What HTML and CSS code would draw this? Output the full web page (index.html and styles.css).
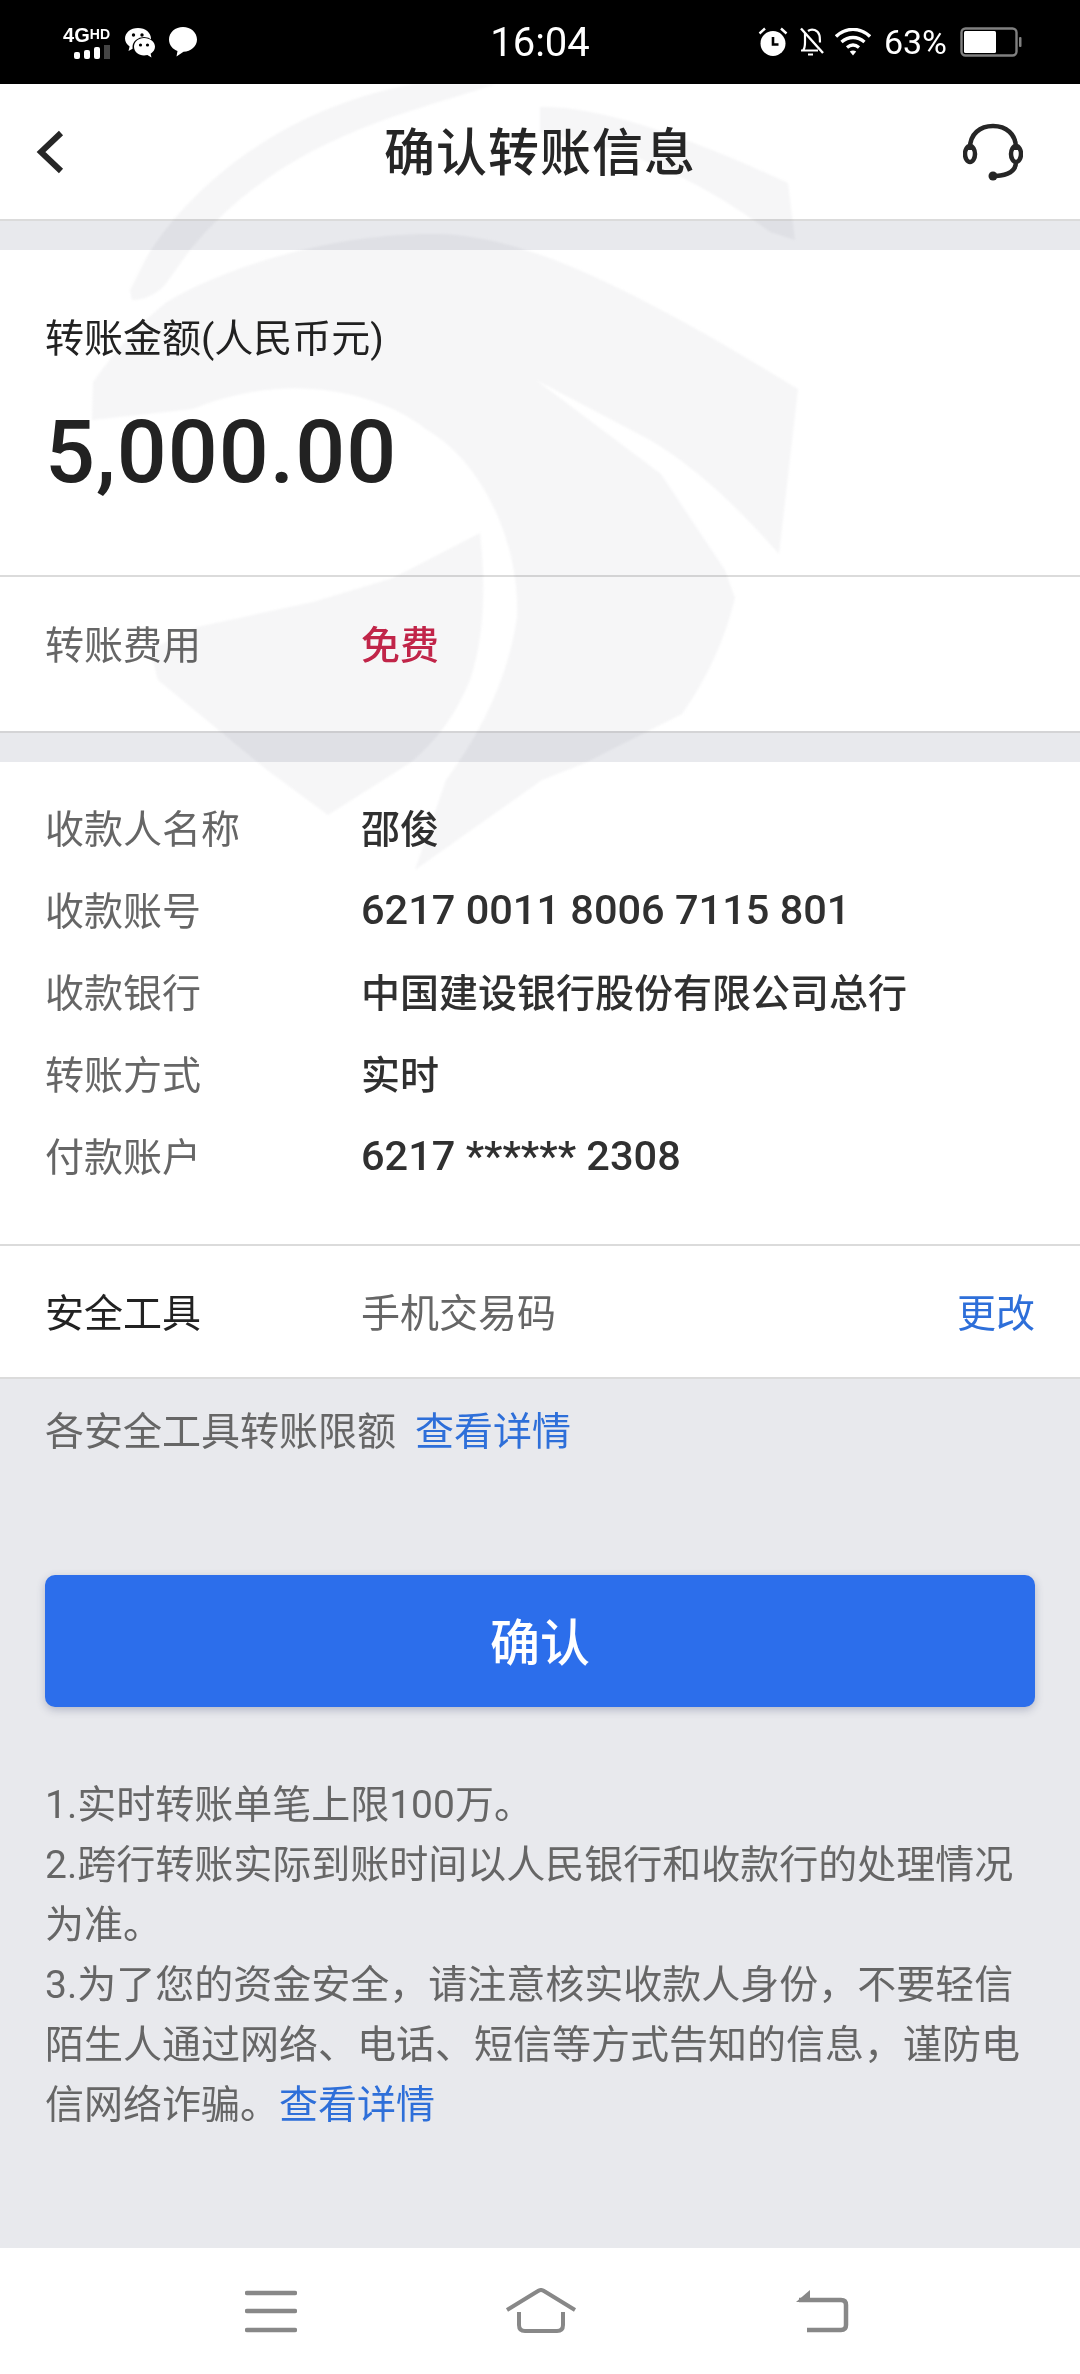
FILE: index.html
```html
<!DOCTYPE html>
<html lang="zh-CN">
<head>
    <meta charset="UTF-8">
    <meta name="viewport" content="width=device-width, initial-scale=1.0">
    <title>确认转账信息</title>
    <link rel="stylesheet" href="styles.css">
</head>
<body>
    <div class="page">
        <div class="status-bar">
            <div class="status-left">
                <div class="net">
                    <div class="net-label">4G<span class="net-hd">HD</span></div>
                    <svg class="net-bars" width="36" height="14" viewBox="0 0 36 14">
                        <rect x="0" y="7" width="6" height="7" rx="2" fill="#fff"/>
                        <rect x="10" y="5" width="6" height="9" rx="2" fill="#fff"/>
                        <rect x="20" y="2" width="6" height="12" rx="2" fill="#fff"/>
                        <rect x="30" y="0" width="6" height="14" fill="#444"/>
                    </svg>
                </div>
                <svg width="31" height="31" viewBox="0 0 31 31">
                    <path d="M14 1C6.5 1 1 5.800 1 11.500c0 3.300 1.800 6 4.600 8L4.500 24l5-2.700c1.400.4 2.900.6 4.500.6 7.500 0 13-4.700 13-10.400S21.500 1 14 1z" fill="#fff"/>
                    <circle cx="9.500" cy="8" r="1.700" fill="#000"/>
                    <circle cx="18" cy="8" r="1.700" fill="#000"/>
                    <ellipse cx="20" cy="20" rx="11.500" ry="10" fill="#000"/>
                    <path d="M20 11c-5.500 0-10 3.900-10 8.800s4.500 8.800 10 8.800c1.200 0 2.300-.2 3.400-.5l4.100 2.400-.9-3.800c2.600-1.600 4.400-4 4.400-6.900 0-4.900-5-8.800-11-8.800z" fill="#fff"/>
                    <circle cx="16.500" cy="18" r="1.600" fill="#000"/>
                    <circle cx="23.500" cy="18" r="1.600" fill="#000"/>
                </svg>
                <svg width="28" height="30" viewBox="0 0 28 30">
                    <path d="M14 0C6.300 0 0 5.300 0 12.500c0 5.700 4 10 8.500 11.500l-1 5.500 7-4.800c7.500-.1 13.500-5.600 13.500-12.200C28 5.300 21.700 0 14 0z" fill="#fff"/>
                </svg>
            </div>
            <div class="status-time">16:04</div>
            <div class="status-right">
                <svg width="30" height="30" viewBox="0 0 30 30">
                    <circle cx="15" cy="16.500" r="12.500" fill="#fff"/>
                    <path d="M15 10v7.500h5.500" fill="none" stroke="#000" stroke-width="2.600"/>
                    <path d="M1.500 6.500 7 1.500M28.500 6.500 23 1.500" stroke="#fff" stroke-width="2.400" fill="none"/>
                </svg>
                <svg width="27" height="30" viewBox="0 0 27 30">
                    <path d="M3 23.500h17M5 23.500c2-2.500 2-5 2-8V6M10 4c4-3 10-1 11.500 4.500.5 2 .3 5 .5 7" fill="none" stroke="#fff" stroke-width="2.200"/>
                    <path d="M10 26.500h5v2h-5z" fill="#fff"/>
                    <path d="M3 1.500 25 26" stroke="#fff" stroke-width="2.400"/>
                </svg>
                <svg width="36" height="28" viewBox="0 0 36 28">
                    <path d="M1 8.500c10-9.500 24-9.500 34 0" fill="none" stroke="#fff" stroke-width="3.400"/>
                    <path d="M6.500 14c7-6 16-6 23 0" fill="none" stroke="#fff" stroke-width="3.400"/>
                    <path d="M12 19.500c4-3.200 8-3.200 12 0" fill="none" stroke="#fff" stroke-width="3.400"/>
                    <path d="M14.800 23.500c2-1.400 4.400-1.400 6.400 0L18 27.500z" fill="#fff"/>
                </svg>
                <span class="status-pct">63%</span>
                <svg width="62" height="30" viewBox="0 0 62 30">
                    <rect x="1.500" y="1.500" width="55" height="27" rx="4" fill="none" stroke="#808080" stroke-width="2.400"/>
                    <rect x="4" y="4" width="32" height="22" rx="1.500" fill="#fff"/>
                    <rect x="59" y="10" width="2.500" height="10" rx="1" fill="#808080"/>
                </svg>
            </div>
        </div>

        <div class="nav-bar">
            <svg class="nav-back" width="28" height="44" viewBox="0 0 28 44">
                <path d="M25 3 5 22l20 19" fill="none" stroke="#262626" stroke-width="6"/>
            </svg>
            <div class="nav-title">确认转账信息</div>
            <svg class="nav-service" width="60" height="58" viewBox="0 0 60 58">
                <path d="M7 27V25C7 11 17 3 30 3s23 8 23 22v2" fill="none" stroke="#262626" stroke-width="4.500"/>
                <ellipse cx="7" cy="31" rx="5" ry="8" fill="none" stroke="#262626" stroke-width="4.500"/>
                <ellipse cx="53" cy="31" rx="5" ry="8" fill="none" stroke="#262626" stroke-width="4.500"/>
                <path d="M53 39c0 8-7 13-20 14" fill="none" stroke="#262626" stroke-width="4.500"/>
                <circle cx="30" cy="53" r="4.500" fill="#262626"/>
            </svg>
        </div>

        <div class="gap"></div>

        <div class="amount-box">
            <div class="amount-label">转账金额(人民币元)</div>
            <div class="amount-value">5,000.00</div>
        </div>

        <div class="row fee-row">
            <span class="row-label">转账费用</span>
            <span class="fee-value">免费</span>
        </div>

        <div class="gap"></div>

        <div class="details">
            <div class="row detail-row"><span class="row-label">收款人名称</span><span class="row-value">邵俊</span></div>
            <div class="row detail-row"><span class="row-label">收款账号</span><span class="row-value row-num">6217 0011 8006 7115 801</span></div>
            <div class="row detail-row"><span class="row-label">收款银行</span><span class="row-value">中国建设银行股份有限公司总行</span></div>
            <div class="row detail-row"><span class="row-label">转账方式</span><span class="row-value">实时</span></div>
            <div class="row detail-row"><span class="row-label">付款账户</span><span class="row-value row-num">6217 ****** 2308</span></div>
        </div>

        <div class="row tool-row">
            <span class="tool-label">安全工具</span>
            <span class="tool-value">手机交易码</span>
            <span class="link">更改</span>
        </div>

        <div class="content">
            <div class="limit-tip">各安全工具转账限额<span class="link limit-link">查看详情</span></div>
            <div class="confirm-btn">确认</div>
            <div class="notes">
                1.实时转账单笔上限100万。<br>
                2.跨行转账实际到账时间以人民银行和收款行的处理情况为准。<br>
                3.为了您的资金安全，请注意核实收款人身份，不要轻信陌生人通过网络、电话、短信等方式告知的信息，谨防电信网络诈骗。<span class="link">查看详情</span>
            </div>
        </div>

        <div class="bottom-bar">
            <svg width="52" height="44" viewBox="0 0 52 44">
                <path d="M2 4h48M2 22h48M2 41h48" stroke="#888" stroke-width="4.500" stroke-linecap="round" fill="none"/>
            </svg>
            <svg width="72" height="46" viewBox="0 0 72 46">
                <path d="M2 22 33 3q3-2 6 0l31 19" fill="none" stroke="#888" stroke-width="4"/>
                <path d="M14 24v13q0 6 6 6h32q6 0 6-6V24" fill="none" stroke="#888" stroke-width="4"/>
            </svg>
            <svg width="54" height="44" viewBox="0 0 54 44">
                <path d="M15 1 1 13h14z" fill="#888"/>
                <path d="M4 11h42q5 0 5 5v20q0 5-5 5H12" fill="none" stroke="#888" stroke-width="4.500"/>
            </svg>
        </div>

        <svg class="watermark" width="1080" height="800" viewBox="0 84 1080 800">
            <path d="M130 290 145 260C180 200 270 110 414 84H497C400 115 280 140 190 250L165 285Q150 300 132 300Z"/>
            <path d="M540 107Q620 105 788 183L795 240 770 232Q660 150 540 133Z"/>
            <path d="M167 302C220 270 330 232 439 234 520 236 620 280 798 389L779 554C740 510 700 470 650 440L536 380 661 474 725 570 735 598Q720 660 682 714L585 763 542 780 415 870 446 780Q505 700 517 617C520 540 480 460 427 430 390 400 330 385 277 389 240 392 215 400 193 409L92 420 93 382Q130 330 167 302Z"/>
            <path d="M480 533Q490 620 470 680 450 730 410 763L328 815 267 770 158 680 150 650 197 627 313 602 393 578Z"/>
        </svg>
    </div>
</body>
</html>
```

FILE: styles.css
```css
body, html {
    margin: 0;
    padding: 0;
    background-color: #e8e9ed;
    font-family: Roboto, "Noto Sans CJK SC", sans-serif;
}
.page {
    position: relative;
    width: 1080px;
    height: 2374px;
    display: flex;
    flex-direction: column;
    overflow: hidden;
    color: #222;
    font-size: 39px;
}

/* status bar */
.status-bar {
    height: 84px;
    background-color: #000;
    color: #fff;
    display: grid;
    grid-template-columns: 1fr auto 1fr;
    align-items: center;
    flex-shrink: 0;
}
.status-left {
    display: flex;
    align-items: center;
    gap: 14px;
    padding-left: 62px;
}
.net {
    display: flex;
    flex-direction: column;
    align-items: flex-end;
    width: 48px;
}
.net-label {
    font-family: "Liberation Sans", sans-serif;
    font-weight: bold;
    font-size: 20px;
    line-height: 17px;
    white-space: nowrap;
}
.net-hd {
    font-size: 14px;
    vertical-align: 3px;
}
.net-bars {
    margin-top: 1px;
}
.status-time {
    font-size: 40px;
}
.status-right {
    display: flex;
    align-items: center;
    justify-content: flex-end;
    gap: 10px;
    padding-right: 58px;
}
.status-pct {
    font-size: 34px;
    margin: 0 3px;
}

/* nav */
.nav-bar {
    height: 135px;
    background-color: #fff;
    border-bottom: 2px solid #dbdbdb;
    display: grid;
    grid-template-columns: 1fr auto 1fr;
    align-items: center;
    padding: 0 36px;
    flex-shrink: 0;
}
.nav-title {
    font-size: 51px;
    font-weight: 500;
    letter-spacing: 1px;
    color: #262626;
    padding-bottom: 5px;
}
.nav-service {
    justify-self: end;
    margin-right: 21px;
}
.gap {
    height: 29px;
    flex-shrink: 0;
}

/* amount */
.amount-box {
    background-color: #fff;
    padding: 59px 45px 74px;
    border-bottom: 2px solid #dbdbdb;
}
.amount-label {
    line-height: 60px;
    margin-bottom: 33px;
}
.amount-value {
    font-size: 88px;
    font-weight: 500;
    line-height: 100px;
    letter-spacing: 1px;
    margin-bottom: -1px;
}

/* rows */
.row {
    display: flex;
    align-items: center;
    padding: 0 45px;
    background-color: #fff;
}
.row-label {
    width: 316px;
    color: #666;
    flex-shrink: 0;
}
.row-value {
    color: #303030;
    font-weight: 500;
}
.row-num {
    font-size: 41.500px;
    padding-top: 3px;
}
.fee-row {
    height: 156px;
    padding-bottom: 25px;
    box-sizing: border-box;
    border-bottom: 2px solid #d4d4d6;
}
.fee-value {
    color: #c8264b;
    font-weight: 500;
}
.details {
    background-color: #fff;
    padding: 23px 0 49px;
    border-bottom: 2px solid #dbdbdb;
}
.detail-row {
    height: 82px;
}
.tool-row {
    height: 133px;
    box-sizing: border-box;
    padding-bottom: 4px;
    border-bottom: 2px solid #dbdbdb;
}
.tool-label {
    width: 316px;
    flex-shrink: 0;
}
.tool-value {
    color: #666;
    flex: 1;
}
.link {
    color: #2e6fd9;
}

/* lower part */
.content {
    flex: 1;
    padding: 23px 45px 0;
}
.limit-tip {
    line-height: 60px;
    color: #666;
}
.limit-link {
    margin-left: 19px;
}
.confirm-btn {
    margin-top: 113px;
    height: 132px;
    line-height: 139px;
    border-radius: 10px;
    background-color: #2c6eeb;
    box-shadow: 0 3px 8px rgba(60, 70, 110, 0.3);
    color: #fff;
    font-size: 50px;
    font-weight: 500;
    text-align: center;
}
.notes {
    margin-top: 68px;
    line-height: 60px;
    color: #666;
}
.bottom-bar {
    height: 126px;
    background-color: #fff;
    display: grid;
    grid-template-columns: 260px 290px 1fr;
    align-items: center;
    flex-shrink: 0;
    padding-left: 245px;
}

/* faint shield over the page */
.watermark {
    position: absolute;
    top: 84px;
    left: 0;
    fill: #f6f6f7;
    mix-blend-mode: multiply;
    pointer-events: none;
    filter: blur(1px);
}
```
